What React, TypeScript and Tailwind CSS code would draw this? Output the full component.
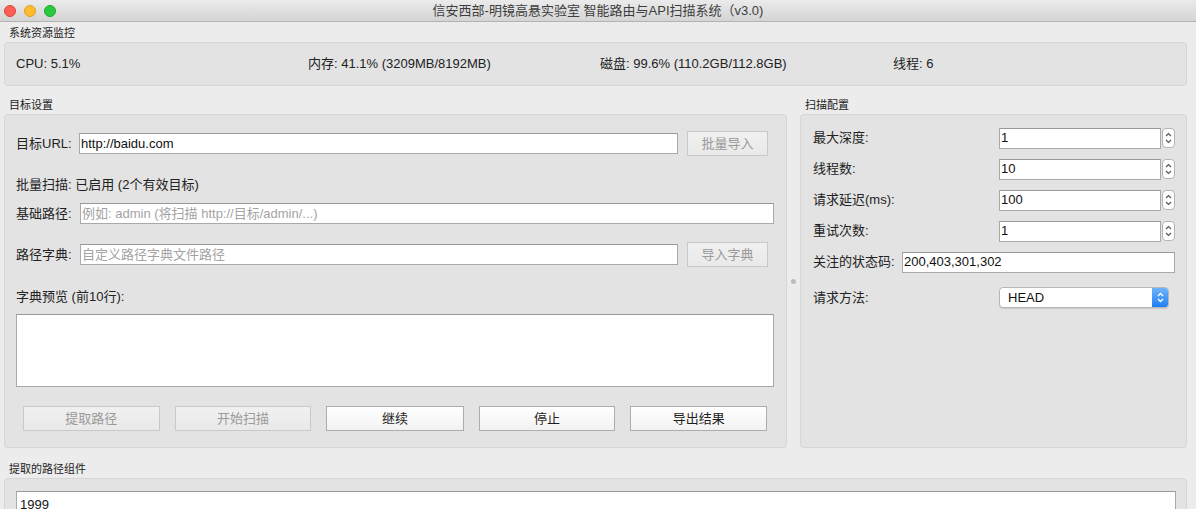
import React from "react";

function Btn({ children, disabled, className = "" }: { children: React.ReactNode; disabled?: boolean; className?: string }) {
  return (
    <div
      className={`flex h-[25px] items-center justify-center border text-[13px] ${
        disabled
          ? "border-[#c9c9c9] bg-gradient-to-b from-[#f0f0f0] to-[#e9e9e9] text-[#9a9a9a]"
          : "border-[#adadad] bg-gradient-to-b from-white to-[#f2f2f2] text-[#1e1e1e]"
      } ${className}`}
    >
      {children}
    </div>
  );
}

function Field({ value, placeholder, className = "" }: { value?: string; placeholder?: string; className?: string }) {
  return (
    <div className={`flex h-[21px] items-center border border-[#a9a9a9] border-t-[#999] bg-white px-[1px] text-[13px] ${className}`}>
      {value ? <span className="text-[#111]">{value}</span> : <span className="text-[#a3a3a3]">{placeholder}</span>}
    </div>
  );
}

function Stepper() {
  return (
    <div className="ml-[1px] flex h-[20px] w-[13px] items-center justify-center rounded-[4px] border border-[#b4b4b4] bg-white">
      <svg width="7" height="14" viewBox="0 0 7 14" fill="none" stroke="#555" strokeWidth="1.1">
        <path d="M1 5 L3.5 2.5 L6 5" />
        <path d="M1 9 L3.5 11.5 L6 9" />
      </svg>
    </div>
  );
}

function SpinRow({ label, value }: { label: string; value: string }) {
  return (
    <div className="flex h-[20px] items-center">
      <div className="w-[186px] text-[13px] text-[#222]">{label}</div>
      <Field value={value} className="h-[20px] w-[162px]" />
      <Stepper />
    </div>
  );
}

function GroupTitle({ children, className = "" }: { children: React.ReactNode; className?: string }) {
  return <div className={`flex h-[20px] items-center pl-[5px] pt-[3px] text-[11px] text-[#222] ${className}`}>{children}</div>;
}

export default function App() {
  return (
    <div className="h-[509px] w-[1196px] overflow-hidden bg-[#ececec] font-['Liberation_Sans','Noto_Sans_CJK_SC',sans-serif]">
      {/* title bar */}
      <div className="relative flex h-[22px] items-center justify-center border-b border-[#b3b3b3] bg-gradient-to-b from-[#ebebeb] to-[#d4d4d4]">
        <div className="absolute left-[4px] top-[5px] flex gap-[8px]">
          <div className="h-[12px] w-[12px] rounded-full border border-[#e0443e] bg-[#fd5f57]" />
          <div className="h-[12px] w-[12px] rounded-full border border-[#dea123] bg-[#febc2e]" />
          <div className="h-[12px] w-[12px] rounded-full border border-[#1aab29] bg-[#2ac940]" />
        </div>
        <span className="text-[13px] text-[#3d3d3d]">信安西部-明镜高悬实验室 智能路由与API扫描系统（v3.0)</span>
      </div>

      <div className="pl-[4px] pr-[9px]">
        <GroupTitle>系统资源监控</GroupTitle>
        <div className="grid h-[44px] grid-cols-[292px_292px_293px_1fr] items-center rounded-[4px] border border-[#d6d6d6] bg-[#e3e3e3] pl-[11px] text-[13px] text-[#222]">
          <div>CPU: 5.1%</div>
          <div>内存: 41.1% (3209MB/8192MB)</div>
          <div>磁盘: 99.6% (110.2GB/112.8GB)</div>
          <div>线程: 6</div>
        </div>

        <div className="mt-[8px] flex">
          {/* left column */}
          <div className="w-[783px]">
            <GroupTitle>目标设置</GroupTitle>
            <div className="flex h-[334px] flex-col rounded-[4px] border border-[#d6d6d6] bg-[#e3e3e3] pl-[11px] pr-[12px] pt-[16px] text-[13px] text-[#222]">
              <div className="flex h-[25px] items-center">
                <div className="w-[63px]">目标URL:</div>
                <Field value="http://baidu.com" className="flex-1" />
                <Btn disabled className="ml-[9px] mr-[6px] w-[81px]">批量导入</Btn>
              </div>
              <div className="mt-[21px] h-[16px] leading-[16px]">批量扫描: 已启用 (2个有效目标)</div>
              <div className="mt-[10px] flex h-[21px] items-center">
                <div className="w-[64px]">基础路径:</div>
                <Field placeholder="例如: admin (将扫描 http://目标/admin/...)" className="flex-1" />
              </div>
              <div className="mt-[18px] flex h-[25px] items-center">
                <div className="w-[64px]">路径字典:</div>
                <Field placeholder="自定义路径字典文件路径" className="flex-1" />
                <Btn disabled className="ml-[9px] mr-[6px] w-[81px]">导入字典</Btn>
              </div>
              <div className="mt-[22px] h-[16px] leading-[16px]">字典预览 (前10行):</div>
              <div className="mt-[9px] h-[73px] border border-[#a9a9a9] border-t-[#999] bg-white" />
              <div className="mt-[19px] flex gap-[15px] px-[7px]">
                <Btn disabled className="w-[137px]">提取路径</Btn>
                <Btn disabled className="w-[137px]">开始扫描</Btn>
                <Btn className="w-[138px]">继续</Btn>
                <Btn className="w-[137px]">停止</Btn>
                <Btn className="w-[137px]">导出结果</Btn>
              </div>
            </div>
          </div>

          {/* splitter */}
          <div className="flex w-[13px] items-center justify-center pt-[20px]">
            <div className="h-[5px] w-[5px] rounded-full bg-[#bcbcbc]" />
          </div>

          {/* right column */}
          <div className="flex-1">
            <GroupTitle>扫描配置</GroupTitle>
            <div className="flex h-[334px] flex-col gap-[11px] rounded-[4px] border border-[#d6d6d6] bg-[#e3e3e3] pl-[12px] pr-[11px] pt-[13px] text-[13px] text-[#222]">
              <SpinRow label="最大深度:" value="1" />
              <SpinRow label="线程数:" value="10" />
              <SpinRow label="请求延迟(ms):" value="100" />
              <SpinRow label="重试次数:" value="1" />
              <div className="flex h-[20px] items-center">
                <div className="w-[89px]">关注的状态码:</div>
                <Field value="200,403,301,302" className="h-[20px] flex-1" />
              </div>
              <div className="mt-[4px] flex h-[21px] items-center">
                <div className="w-[186px]">请求方法:</div>
                <div className="flex h-[21px] w-[170px] overflow-hidden rounded-[4px] border border-[#b8b8b8] bg-white shadow-[0_1px_1px_rgba(0,0,0,0.12)]">
                  <div className="flex flex-1 items-center pl-[8px] text-[13px] text-[#111]">HEAD</div>
                  <div className="flex w-[16px] items-center justify-center bg-gradient-to-b from-[#6db3fb] to-[#1a7ff5]">
                    <svg width="7" height="13" viewBox="0 0 7 13" fill="none" stroke="#fff" strokeWidth="1.3">
                      <path d="M1 5 L3.5 2.5 L6 5" />
                      <path d="M1 8 L3.5 10.5 L6 8" />
                    </svg>
                  </div>
                </div>
              </div>
            </div>
          </div>
        </div>

        <GroupTitle className="mt-[10px]">提取的路径组件</GroupTitle>
        <div className="h-[60px] rounded-[4px] border border-[#d6d6d6] bg-[#e3e3e3] pl-[11px] pr-[10px] pt-[12px]">
          <div className="h-[40px] border border-[#a9a9a9] border-t-[#999] bg-white px-[3px] pt-[3px] text-[13px] text-[#111]">1999</div>
        </div>
      </div>
    </div>
  );
}
